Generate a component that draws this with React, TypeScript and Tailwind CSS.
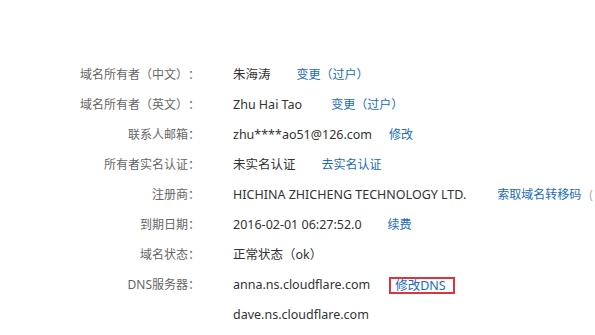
import React from "react";

type Row = { label: string; value: string; link?: string; ml?: string; boxed?: boolean; extra?: string };

const rows: Row[] = [
  { label: "域名所有者（中文）：", value: "朱海涛", link: "变更（过户）", ml: "ml-[26px]" },
  { label: "域名所有者（英文）：", value: "Zhu Hai Tao", link: "变更（过户）", ml: "ml-[29px]" },
  { label: "联系人邮箱：", value: "zhu****ao51@126.com", link: "修改", ml: "ml-[17px]" },
  { label: "所有者实名认证：", value: "未实名认证", link: "去实名认证", ml: "ml-[26px]" },
  { label: "注册商：", value: "HICHINA ZHICHENG TECHNOLOGY LTD.", link: "索取域名转移码", ml: "ml-[31px]", extra: "(" },
  { label: "到期日期：", value: "2016-02-01 06:27:52.0", link: "续费", ml: "ml-[26px]" },
  { label: "域名状态：", value: "正常状态（ok）" },
  { label: "DNS服务器：", value: "anna.ns.cloudflare.com", link: "修改DNS", ml: "ml-[19px]", boxed: true },
  { label: "", value: "dave.ns.cloudflare.com" },
];

export default function App() {
  return (
    <div
      className="w-[595px] h-[335px] overflow-hidden bg-white pt-[60px] text-[12px] [text-spacing-trim:space-all]"
      style={{ fontFamily: '"Noto Sans", "Noto Sans CJK SC", sans-serif' }}
    >
      {rows.map((r, i) => (
        <div key={i} className="flex h-[30px] items-center whitespace-nowrap">
          <div className="w-[200px] shrink-0 text-right text-[#666]">{r.label}</div>
          <div className="ml-[33px] flex items-center">
            <span className="text-[12.5px] text-[#333]">{r.value}</span>
            {r.link && !r.boxed && (
              <span className={`${r.ml} text-[#1b6bb8]`}>{r.link}</span>
            )}
            {r.boxed && (
              <span className={`${r.ml} border-2 border-[#e03340] pl-[4px] pr-[7px] text-[12.5px] leading-[13px] text-[#1b6bb8]`}>
                {r.link}
              </span>
            )}
            {r.extra && <span className="ml-[8px] text-[#aaa]">{r.extra}</span>}
          </div>
        </div>
      ))}
    </div>
  );
}
